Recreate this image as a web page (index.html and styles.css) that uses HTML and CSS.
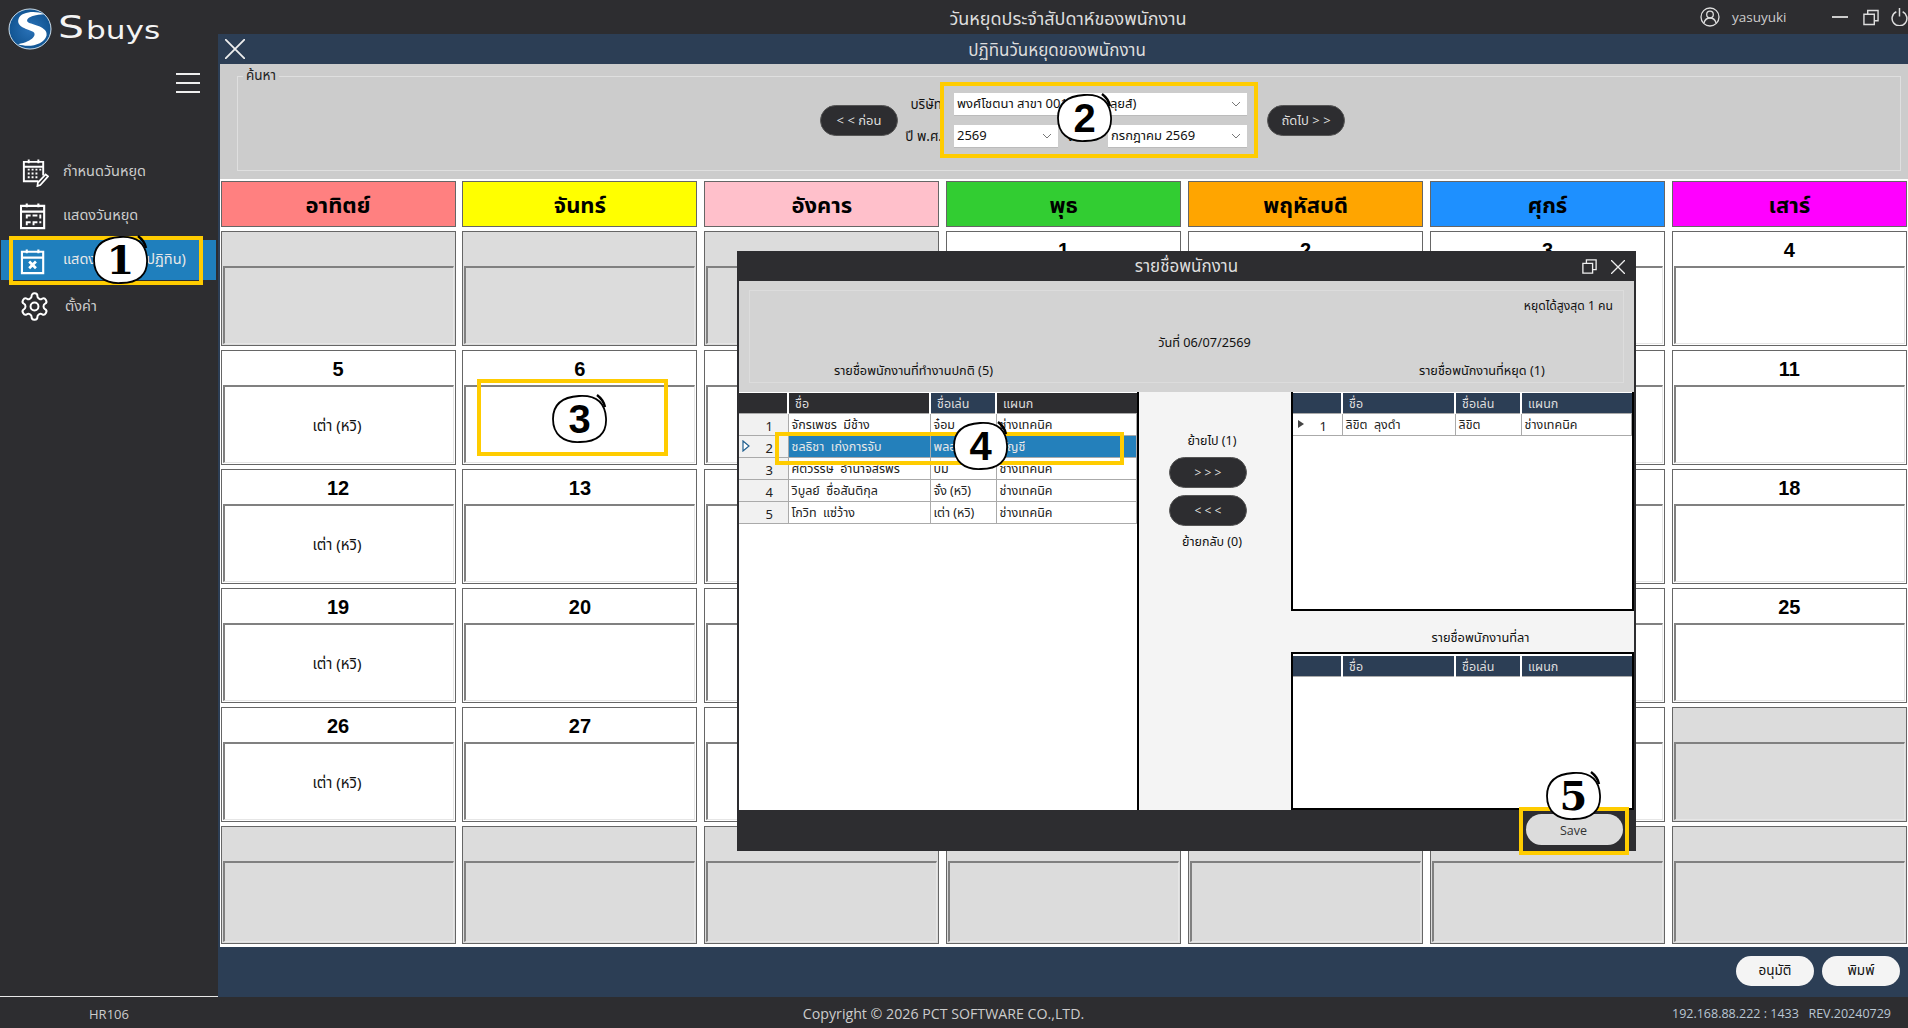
FILE: index.html
```html
<!DOCTYPE html>
<html lang="th">
<head>
<meta charset="utf-8">
<title>วันหยุดประจำสัปดาห์ของพนักงาน</title>
<link rel="stylesheet" href="styles.css">
</head>
<body>
<svg class="defs" width="0" height="0" aria-hidden="true">
  <symbol id="blob" viewBox="0 0 57 50" preserveAspectRatio="none">
    <path d="M28 2C44 1 54 8 55 24C56 40 46 48 29 48C12 49 2 40 2 25C2 10 12 3 28 2Z" fill="#fff" stroke="#000" stroke-width="1.8"/>
    <path d="M46 1C50 4 53 8 54 13" fill="none" stroke="#000" stroke-width="2.4"/>
  </symbol>
  <symbol id="chev" viewBox="0 0 10 6"><path d="M1 1l4 4 4-4" fill="none" stroke="#777" stroke-width="1"/></symbol>
  <symbol id="restore" viewBox="0 0 17 17"><path d="M1 5h11v11H1zM5 5V1h11v11h-4" fill="none" stroke="currentColor" stroke-width="1.5"/></symbol>
</svg>
<div class="app">
  <div class="shell">
    <aside class="sidebar">
      <div class="logo">
        <svg class="logo-mark" viewBox="0 0 44 44" preserveAspectRatio="none">
          <defs><radialGradient id="lg" cx=".5" cy=".5" r=".55"><stop offset="0" stop-color="#2a72b8"/><stop offset="1" stop-color="#0f528f"/></radialGradient></defs>
          <circle cx="22" cy="22" r="21" fill="url(#lg)" stroke="#cfe0ee" stroke-width="1"/>
          <path d="M36 6.5C28 2.6 13 3.5 10.5 11.5C8 20 20 22 25 25C29 27.5 26 35 10 38C22 42 36 38 38.5 29C40.5 21 28 18 22 16C16 13.500 19 7.500 36 6.5Z" fill="#fff"/>
        </svg>
        <div class="wordmark"><span class="wm-s">S</span><span class="wm-rest">buys</span></div>
      </div>
      <div class="burger-row">
        <div class="burger"><i></i><i></i><i></i></div>
      </div>
      <nav class="nav">
        <div class="nav-item">
          <svg class="nav-icon" viewBox="0 0 30 30" fill="none" stroke="#fff" stroke-width="2">
            <path d="M24 18V4H4v20h15"/><path d="M4 9h20M9 1.500v4M19 1.500v4"/>
            <path d="M8 12h2M12 12h2M16 12h2M20 12h2M8 16h2M12 16h2M16 16h2M8 20h2M12 20h2M16 20h2" stroke-width="2"/>
            <path d="M29 19l-8 9-3 1 .5-3.500 8-8.500z" stroke-width="1.800"/>
          </svg>
          <span>กำหนดวันหยุด</span>
        </div>
        <div class="nav-item">
          <svg class="nav-icon" viewBox="0 0 30 30" fill="none" stroke="#fff" stroke-width="2.200">
            <path d="M1 4h24v23H1zM1 10h24M7 1.500v4M19 1.500v4"/>
            <path d="M6 13h5v2H8v2H6zM13 13h5v2h-5zM20 13h2v4h-2zM6 20h5v2H8v2H6zM13 20h5v2h-3v2h-2zM20 20h2v2h-2z" fill="#fff" stroke="none"/>
          </svg>
          <span>แสดงวันหยุด</span>
        </div>
        <div class="nav-item is-active">
          <svg class="nav-icon" viewBox="0 0 30 30" fill="none" stroke="#fff" stroke-width="2.200">
            <path d="M2 6h22v22H2zM2 12h22M7 3.500v4M19 3.500v4"/>
            <path d="M9.500 16l7 7M16.500 16l-7 7" stroke-width="2.800"/>
          </svg>
          <span>แสดงวันหยุด (ปฏิทิน)</span>
        </div>
        <div class="nav-item nav-settings">
          <svg class="nav-icon" viewBox="1 1 22 22" fill="none" stroke="#fff" stroke-width="1.500" stroke-linejoin="round">
            <path d="M12.220 2h-.44a2 2 0 0 0-2 2v.18a2 2 0 0 1-1 1.730l-.43.25a2 2 0 0 1-2 0l-.15-.08a2 2 0 0 0-2.730.73l-.22.38a2 2 0 0 0 .73 2.730l.15.1a2 2 0 0 1 1 1.720v.51a2 2 0 0 1-1 1.740l-.15.09a2 2 0 0 0-.73 2.730l.22.38a2 2 0 0 0 2.730.73l.15-.08a2 2 0 0 1 2 0l.43.25a2 2 0 0 1 1 1.730V20a2 2 0 0 0 2 2h.44a2 2 0 0 0 2-2v-.18a2 2 0 0 1 1-1.730l.43-.25a2 2 0 0 1 2 0l.15.08a2 2 0 0 0 2.730-.73l.22-.39a2 2 0 0 0-.73-2.730l-.15-.08a2 2 0 0 1-1-1.740v-.5a2 2 0 0 1 1-1.740l.15-.09a2 2 0 0 0 .73-2.730l-.22-.38a2 2 0 0 0-2.730-.73l-.15.08a2 2 0 0 1-2 0l-.43-.25a2 2 0 0 1-1-1.730V4a2 2 0 0 0-2-2z"/>
            <circle cx="12" cy="12" r="3"/>
          </svg>
          <span>ตั้งค่า</span>
        </div>
      </nav>
    </aside>

    <main class="main">
      <header class="titlebar">
        <div class="title">วันหยุดประจำสัปดาห์ของพนักงาน</div>
        <div class="user">
          <svg class="user-icon" viewBox="0 0 20 20" fill="none" stroke="#ddd" stroke-width="1.300"><circle cx="10" cy="10" r="9"/><circle cx="10" cy="7.500" r="3.300"/><path d="M4 16c1-4 3-5 6-5s5 1 6 5"/></svg>
          <span>yasuyuki</span>
        </div>
        <div class="win-btns">
          <span class="win-min"></span>
          <svg class="win-restore"><use href="#restore"/></svg>
          <svg class="win-power" viewBox="0 0 16 17" fill="none" stroke="#ddd" stroke-width="1.400"><path d="M5 3.500a7 7 0 1 0 6 0M8 0v8"/></svg>
        </div>
      </header>
      <div class="subbar">
        <svg class="sub-close" viewBox="0 0 20 20" stroke="#eee" stroke-width="1.800"><path d="M0 0l20 20M20 0L0 20"/></svg>
        <div class="subtitle">ปฏิทินวันหยุดของพนักงาน</div>
      </div>
      <section class="content">
        <div class="search">
          <fieldset class="search-box">
            <legend>ค้นหา</legend>
            <div class="search-row">
              <button class="pill dark">&lt; &lt; ก่อน</button>
              <div class="filters">
                <label>บริษัท</label>
                <div class="select wide"><span>พงศ์โชตนา สาขา 001 (ถนน หลุยส์)</span><svg class="chev"><use href="#chev"/></svg></div>
                <label>ปี พ.ศ.</label>
                <div class="select"><span>2569</span><svg class="chev"><use href="#chev"/></svg></div>
                <label>เดือน</label>
                <div class="select"><span>กรกฎาคม 2569</span><svg class="chev"><use href="#chev"/></svg></div>
              </div>
              <button class="pill dark">ถัดไป &gt; &gt;</button>
            </div>
          </fieldset>
        </div>
        <div class="calendar">
          <div class="dow sun">อาทิตย์</div>
          <div class="dow mon">จันทร์</div>
          <div class="dow tue">อังคาร</div>
          <div class="dow wed">พุธ</div>
          <div class="dow thu">พฤหัสบดี</div>
          <div class="dow fri">ศุกร์</div>
          <div class="dow sat">เสาร์</div>

          <div class="cell off"><div class="num"></div><div class="box"></div></div>
          <div class="cell off"><div class="num"></div><div class="box"></div></div>
          <div class="cell off"><div class="num"></div><div class="box"></div></div>
          <div class="cell"><div class="num">1</div><div class="box"></div></div>
          <div class="cell"><div class="num">2</div><div class="box"></div></div>
          <div class="cell"><div class="num">3</div><div class="box"></div></div>
          <div class="cell"><div class="num">4</div><div class="box"></div></div>

          <div class="cell"><div class="num">5</div><div class="box">เต่า (หวิ)</div></div>
          <div class="cell"><div class="num">6</div><div class="box"></div></div>
          <div class="cell"><div class="num">7</div><div class="box"></div></div>
          <div class="cell"><div class="num">8</div><div class="box"></div></div>
          <div class="cell"><div class="num">9</div><div class="box"></div></div>
          <div class="cell"><div class="num">10</div><div class="box"></div></div>
          <div class="cell"><div class="num">11</div><div class="box"></div></div>

          <div class="cell"><div class="num">12</div><div class="box">เต่า (หวิ)</div></div>
          <div class="cell"><div class="num">13</div><div class="box"></div></div>
          <div class="cell"><div class="num">14</div><div class="box"></div></div>
          <div class="cell"><div class="num">15</div><div class="box"></div></div>
          <div class="cell"><div class="num">16</div><div class="box"></div></div>
          <div class="cell"><div class="num">17</div><div class="box"></div></div>
          <div class="cell"><div class="num">18</div><div class="box"></div></div>

          <div class="cell"><div class="num">19</div><div class="box">เต่า (หวิ)</div></div>
          <div class="cell"><div class="num">20</div><div class="box"></div></div>
          <div class="cell"><div class="num">21</div><div class="box"></div></div>
          <div class="cell"><div class="num">22</div><div class="box"></div></div>
          <div class="cell"><div class="num">23</div><div class="box"></div></div>
          <div class="cell"><div class="num">24</div><div class="box"></div></div>
          <div class="cell"><div class="num">25</div><div class="box"></div></div>

          <div class="cell"><div class="num">26</div><div class="box">เต่า (หวิ)</div></div>
          <div class="cell"><div class="num">27</div><div class="box"></div></div>
          <div class="cell"><div class="num">28</div><div class="box"></div></div>
          <div class="cell"><div class="num">29</div><div class="box"></div></div>
          <div class="cell"><div class="num">30</div><div class="box"></div></div>
          <div class="cell"><div class="num">31</div><div class="box"></div></div>
          <div class="cell off"><div class="num"></div><div class="box"></div></div>

          <div class="cell off"><div class="num"></div><div class="box"></div></div>
          <div class="cell off"><div class="num"></div><div class="box"></div></div>
          <div class="cell off"><div class="num"></div><div class="box"></div></div>
          <div class="cell off"><div class="num"></div><div class="box"></div></div>
          <div class="cell off"><div class="num"></div><div class="box"></div></div>
          <div class="cell off"><div class="num"></div><div class="box"></div></div>
          <div class="cell off"><div class="num"></div><div class="box"></div></div>
        </div>
        <div class="actions">
          <button class="pill light">อนุมัติ</button>
          <button class="pill light">พิมพ์</button>
        </div>
      </section>
    </main>
  </div>
  <footer class="footer">
    <div class="f-code">HR106</div>
    <div class="f-copy">Copyright © 2026 PCT SOFTWARE CO.,LTD.</div>
    <div class="f-info"><span>192.168.88.222 : 1433</span><span>REV.20240729</span></div>
  </footer>

  <div class="modal">
    <div class="modal-title">
      <span>รายชื่อพนักงาน</span>
      <svg class="m-restore"><use href="#restore"/></svg>
      <svg class="m-close" viewBox="0 0 14 14" stroke="#eee" stroke-width="1.300"><path d="M0 0l14 14M14 0L0 14"/></svg>
    </div>
    <div class="modal-head">
      <div class="head-box">
        <div class="head-max">หยุดได้สูงสุด 1 คน</div>
        <div class="head-date">วันที่ 06/07/2569</div>
        <div class="head-cols">
          <span>รายชื่อพนักงานที่ทำงานปกติ (5)</span>
          <span>รายชื่อพนักงานที่หยุด (1)</span>
        </div>
      </div>
    </div>
    <div class="modal-body">
      <div class="list-left">
        <table class="grid">
          <colgroup><col class="c-h"><col class="c-n"><col class="c-k"><col></colgroup>
          <thead class="dark-head"><tr><th></th><th>ชื่อ</th><th class="hover">ชื่อเล่น</th><th>แผนก</th></tr></thead>
          <tbody>
            <tr><td class="rh">1</td><td>จักรเพชร&nbsp; มีช้าง</td><td>จ๋อม</td><td>ช่างเทคนิค</td></tr>
            <tr class="sel"><td class="rh"><svg class="tri-o" viewBox="0 0 8 12"><path d="M1 1l6 5-6 5z" fill="#fff" stroke="#1f5f8f" stroke-width="1.200"/></svg>2</td><td>ชลธิชา&nbsp; เก่งการจับ</td><td>พลอย</td><td>บัญชี</td></tr>
            <tr><td class="rh">3</td><td>ศตวรรษ&nbsp; อำนาจสิริพร</td><td>บิม</td><td>ช่างเทคนิค</td></tr>
            <tr><td class="rh">4</td><td>วิบูลย์&nbsp; ซื่อสันติกุล</td><td>จั๋ง (หวิ)</td><td>ช่างเทคนิค</td></tr>
            <tr><td class="rh">5</td><td>โกวิท&nbsp; แซ่ว้าง</td><td>เต่า (หวิ)</td><td>ช่างเทคนิค</td></tr>
          </tbody>
        </table>
      </div>
      <div class="mid">
        <div class="mid-label">ย้ายไป (1)</div>
        <button class="pill dark mid-btn">&gt; &gt; &gt;</button>
        <button class="pill dark mid-btn">&lt; &lt; &lt;</button>
        <div class="mid-label">ย้ายกลับ (0)</div>
      </div>
      <div class="right">
        <div class="list-right">
          <table class="grid rgrid">
            <colgroup><col class="c-h"><col class="c-n2"><col class="c-k"><col></colgroup>
            <thead class="navy-head"><tr><th></th><th>ชื่อ</th><th>ชื่อเล่น</th><th>แผนก</th></tr></thead>
            <tbody>
              <tr class="plain"><td class="rh white"><i class="tri"></i>1</td><td>ลิขิต&nbsp; ลุงดำ</td><td>ลิขิต</td><td>ช่างเทคนิค</td></tr>
            </tbody>
          </table>
        </div>
        <div class="leave-label">รายชื่อพนักงานที่ลา</div>
        <div class="list-leave">
          <table class="grid rgrid">
            <colgroup><col class="c-h"><col class="c-n2"><col class="c-k"><col></colgroup>
            <thead class="navy-head"><tr><th></th><th>ชื่อ</th><th>ชื่อเล่น</th><th>แผนก</th></tr></thead>
          </table>
        </div>
      </div>
    </div>
    <div class="modal-foot"><button class="pill save">Save</button></div>
  </div>

  <div class="mark mark-1"></div>
  <div class="mark mark-2"></div>
  <div class="mark mark-3"></div>
  <div class="mark mark-4"></div>
  <div class="mark mark-5"></div>
  <div class="badge badge-1"><svg><use href="#blob"/></svg><b class="serif">1</b></div>
  <div class="badge badge-2"><svg><use href="#blob"/></svg><b>2</b></div>
  <div class="badge badge-3"><svg><use href="#blob"/></svg><b>3</b></div>
  <div class="badge badge-4"><svg><use href="#blob"/></svg><b>4</b></div>
  <div class="badge badge-5"><svg><use href="#blob"/></svg><b class="serif">5</b></div>
</div>
</body>
</html>
```
FILE: styles.css
```css
* { box-sizing: border-box; }
html, body { margin: 0; height: 100%; overflow: hidden; }
body {
  font-family: "Noto Sans Thai", "Noto Sans", "Open Sans", sans-serif;
  font-size: 13px;
  color: #111;
  background: #2d2d30;
}
.defs { position: absolute; }
button { font: inherit; border: 0; padding: 0; }

.app { position: relative; width: 1908px; height: 1028px; display: flex; flex-direction: column; overflow: hidden; }
.shell { flex: 1; display: flex; min-height: 0; }

/* Sidebar */
.sidebar { width: 218px; flex: none; background: #2d2d30; border-bottom: 1px solid #e8e8e8; color: #ccc; }
.logo { display: flex; align-items: center; height: 58px; padding: 8px 0 8px 8px; }
.logo-mark { width: 44px; height: 42px; flex: none; }
.wordmark { margin-left: 6px; color: #f4f4f4; font-family: "DejaVu Sans", sans-serif; font-weight: 400; line-height: 1; display: flex; align-items: flex-end; transform: translateY(-2px); }
.wm-s { font-size: 32px; transform: scaleX(1.28); transform-origin: left bottom; width: 28px; }
.wm-rest { font-size: 24px; transform: scaleX(1.3); transform-origin: left bottom; }
.burger-row { display: flex; justify-content: flex-end; padding: 15px 18px 0 0; }
.burger { width: 24px; display: flex; flex-direction: column; gap: 7px; }
.burger i { display: block; height: 2px; background: #eee; }
.nav { margin-top: 59px; display: flex; flex-direction: column; gap: 4px; }
.nav-item { height: 40px; margin: 0 2px 0 1px; padding-left: 19px; display: flex; align-items: center; font-size: 14.500px; color: #ccc; }
.nav-item.is-active { background: #1f7fbd; color: #e8e8e8; }
.nav-icon { width: 29px; height: 29px; flex: none; margin-right: 14px; }
.nav-settings { padding-top: 5px; }
.nav-settings span { margin-left: 2px; }

/* Main */
.main { flex: 1; min-width: 0; display: flex; flex-direction: column; }
.titlebar { height: 34px; background: #2d2d30; color: #ddd; display: flex; align-items: center; position: relative; flex: none; }
.title { text-align: center; font-size: 18px; position: absolute; left: 0; top: 6px; width: 1700px; }
.user { position: absolute; left: 1482px; display: flex; align-items: center; gap: 12px; color: #ccc; font-family: "Open Sans", sans-serif; font-size: 13.500px; }
.user-icon { width: 20px; height: 20px; }
.win-btns { position: absolute; left: 1614px; display: flex; align-items: center; width: 76px; color: #ddd; }
.win-min { width: 17px; height: 2px; background: #ccc; margin-right: 15px; }
.win-restore { width: 17px; height: 17px; margin-right: 12px; }
.win-power { width: 17px; height: 18px; flex: none; }

.subbar { height: 30px; flex: none; background: #2c3e55; color: #ddd; display: flex; align-items: center; position: relative; padding-top: 3px; }
.sub-close { position: absolute; left: 7px; top: 5px; width: 20px; height: 20px; }
.subtitle { width: 100%; text-align: center; font-size: 17px; padding-right: 12px; }

.content { flex: 1; min-height: 0; display: flex; flex-direction: column; border-left: 2px solid #2c3e55; background: #fff; }
.search { height: 115px; flex: none; background: #ccc; padding: 3px 7px 8px 17px; }
.search-box { margin: 0; padding: 0 0 14px 27px; height: 104px; border: 1px solid #dfdfdf; min-width: 0; }
.search-box legend { margin-left: -22px; padding: 0 3px; font-size: 13.500px; line-height: 18px; color: #222; }
.search-row { display: flex; justify-content: center; align-items: center; height: 100%; }
.pill { width: 78px; height: 31px; border-radius: 16px; font-size: 13px; display: block; }
.pill.dark { background: #2d2d30; color: #ddd; border: 1px solid #555; }
.pill.light { background: #f4f4f4; color: #111; width: 78px; height: 30px; font-size: 13.500px; }
.filters { display: grid; grid-template-columns: 44px 104px 38px 139px; gap: 9px 6px; margin: 0 20px 0 6px; align-items: center; }
.filters label { text-align: right; font-size: 13.500px; color: #111; white-space: nowrap; padding-right: 6px; }
.select { height: 23px; background: #fff; display: flex; align-items: center; justify-content: space-between; padding: 0 6px 0 3px; font-size: 13px; color: #111; border-bottom: 1px solid #bbb; white-space: nowrap; }
.select.wide { grid-column: 2 / 5; }
.chev { width: 10px; height: 6px; flex: none; }

/* Calendar */
.calendar { flex: 1; min-height: 0; display: grid; grid-template-columns: repeat(7, 235px); grid-template-rows: 46px repeat(5, 115px) 118px; gap: 4px 6.900px; padding: 2px 0 3px .5px; }
.dow { border: 1px solid #666; display: flex; align-items: center; justify-content: center; font-size: 22px; font-weight: 700; color: #000; padding-top: 5px; }
.sun { background: #ff8080; }
.mon { background: #ff0; }
.tue { background: #ffc0cb; }
.wed { background: #32cd32; }
.thu { background: #ffa500; }
.fri { background: #1e90ff; }
.sat { background: #f0f; }
.cell { border: 1px solid #666; display: flex; flex-direction: column; min-height: 0; background: #fff; }
.cell.off, .cell.off .box { background: #dcdcdc; }
.num { height: 34px; flex: none; text-align: center; font-family: "Liberation Sans", sans-serif; font-size: 20px; font-weight: 700; line-height: 37px; color: #000; overflow: hidden; }
.box { flex: 1; margin: 0 1px 1px; border: 1px solid #e6e6e6; border-top: 2px solid #808080; border-left: 2px solid #808080; display: flex; align-items: center; justify-content: center; font-size: 15px; padding: 3px 3px 0 0; background: #fff; }
.actions { height: 50px; flex: none; background: #2c3e55; display: flex; justify-content: flex-end; gap: 8px; padding: 9px 8px 0 0; }

/* Footer */
.footer { height: 31px; flex: none; background: #2d2d30; color: #ccc; display: flex; align-items: center; font-family: "Open Sans", sans-serif; font-size: 13px; padding-top: 2px; }
.f-code { width: 218px; text-align: center; }
.f-copy { flex: 1; text-align: center; font-size: 14.200px; padding-right: 3px; }
.f-info { width: 236px; flex: none; padding-right: 17px; display: flex; justify-content: space-between; color: #b9c6d3; font-size: 12.500px; }

/* Modal */
.modal { position: absolute; left: 737px; top: 251px; width: 899px; height: 600px; background: #2d2d30; display: flex; flex-direction: column; padding: 0 2px; }
.modal-title { height: 30px; flex: none; display: flex; align-items: center; justify-content: center; color: #ddd; font-size: 17px; position: relative; padding-top: 1px; }
.m-restore { position: absolute; right: 37px; top: 8px; width: 15px; height: 15px; color: #eee; }
.m-close { position: absolute; right: 9px; top: 9px; width: 14px; height: 14px; }
.modal-head { height: 111px; flex: none; background: #d3d3d3; padding: 9px 10px 9px 10px; }
.head-box { height: 100%; border: 1px solid #dcdcdc; font-size: 12.700px; color: #111; display: flex; flex-direction: column; }
.head-max { text-align: right; padding: 6px 10px 0 0; height: 31px; font-size: 12.200px; }
.head-date { text-align: center; height: 37px; padding: 12px 0 0 36px; }
.head-cols { display: flex; padding-top: 3px; }
.head-cols span:first-child { margin-left: 84px; width: 585px; }
.modal-body { flex: 1; min-height: 0; display: flex; background: #f4f4f4; }
.list-left { width: 400px; flex: none; background: #fff; border-right: 2px solid #000; }
.grid { width: 100%; table-layout: fixed; border-collapse: collapse; font-size: 12.500px; line-height: 16px; color: #222; }
.list-left .grid { width: 398px; }
.c-h { width: 49px; }
.c-n { width: 142px; }
.c-k { width: 66px; }
.c-n2 { width: 113px; }
.grid th { height: 21px; text-align: left; font-weight: 400; padding: 3px 0 0 6px; color: #ddd; border-left: 2px solid #fff; border-top: 1px solid #fff; border-bottom: 1px solid #aaa; }
.grid th:first-child { border-left: 0; }
.dark-head th { background: #2d2d30; }
.dark-head th.hover { background: #2c3e55; }
.navy-head th { background: #2c3e55; }
.grid td { height: 22px; padding: 2px 0 0 3px; border: 1px solid #aaa; white-space: nowrap; overflow: hidden; background: #fff; }
.grid td.rh { background: #f1f1f1; text-align: center; padding: 4px 0 0 12px; position: relative; border-left: 0; font-size: 13px; }
.grid td.rh.white { background: #fff; }
.grid tr.sel td { background: #2480bb; color: #e8e8e8; }
.grid tr.sel td.rh { background: #f1f1f1; color: #222; }
.tri-o { position: absolute; left: 3px; top: 4px; width: 8px; height: 12px; }
.tri { position: absolute; left: 5px; top: 6px; border-left: 6px solid #444; border-top: 4px solid transparent; border-bottom: 4px solid transparent; }
.mid { width: 152px; flex: none; display: flex; flex-direction: column; align-items: center; padding: 40px 14px 0 0; }
.mid-label { font-size: 12.500px; color: #111; height: 20px; line-height: 20px; margin-left: 8px; white-space: nowrap; }
.mid-btn { margin-bottom: 7px; width: 78px; font-size: 12px; }
.mid-label + .mid-btn { margin-top: 5px; }
.right { flex: 1; min-width: 0; display: flex; flex-direction: column; }
.list-right { height: 219px; background: #fff; border: 2px solid #000; border-top: 0; }
.leave-label { height: 41px; line-height: 18px; padding: 18px 0 0 36px; text-align: center; font-size: 12.800px; color: #111; }
.list-leave { height: 158px; background: #fff; border: 2px solid #000; padding-top: 1px; }
.modal-foot { height: 41px; flex: none; display: flex; justify-content: flex-end; padding: 4px 11px 0 0; }
.pill.save { width: 97px; height: 31px; background: #dcdcdc; color: #333; font-family: "Open Sans", sans-serif; font-size: 12.500px; padding: 1px 2px 0 0; }

/* Annotations */
.mark { position: absolute; border: 4px solid #fc0; }
.mark-1 { left: 9px; top: 236px; width: 194px; height: 49px; }
.mark-2 { left: 940px; top: 82px; width: 318px; height: 76px; }
.mark-3 { left: 477px; top: 379px; width: 191px; height: 77px; }
.mark-4 { left: 775px; top: 432px; width: 349px; height: 33px; }
.mark-5 { left: 1519px; top: 807px; width: 110px; height: 48px; }
.badge { position: absolute; width: 57px; height: 50px; display: flex; align-items: center; justify-content: center; font-family: "Liberation Sans", sans-serif; font-size: 40px; color: #000; }
.badge svg { position: absolute; left: 0; top: 0; width: 100%; height: 100%; }
.badge b { position: relative; line-height: 1; }
.badge .serif { font-family: "DejaVu Serif", serif; }
.badge-1 { left: 92px; top: 235px; }
.badge-2 { left: 1056px; top: 93px; }
.badge-3 { left: 551px; top: 394px; }
.badge-4 { left: 952px; top: 421px; }
.badge-5 { left: 1545px; top: 771px; }
```
